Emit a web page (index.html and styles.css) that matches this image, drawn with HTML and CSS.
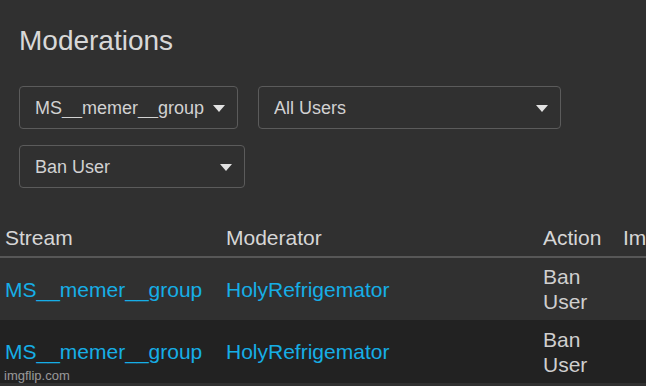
FILE: index.html
```html
<!DOCTYPE html>
<html lang="en">
<head>
  <title>Moderations</title>
  <meta charset="utf-8">
  <meta name="viewport" content="width=device-width, initial-scale=1">
  <link rel="stylesheet" href="styles.css">
</head>
<body>
  <section class="filters">
    <h1 class="title">Moderations</h1>

    <div class="filter-row">
      <div class="select-wrapper select-stream">
        <select class="select" name="stream">
          <option value="ms_memer_group" selected>MS__memer__group</option>
        </select>
      </div>
      <div class="select-wrapper select-users">
        <select class="select" name="user">
          <option value="all" selected>All Users</option>
        </select>
      </div>
    </div>

    <div class="filter-row">
      <div class="select-wrapper select-action">
        <select class="select" name="action">
          <option value="ban" selected>Ban User</option>
        </select>
      </div>
    </div>
  </section>

  <table class="log">
    <colgroup>
      <col class="col-stream">
      <col class="col-moderator">
      <col class="col-action">
      <col class="col-image">
    </colgroup>
    <thead>
      <tr>
        <th>Stream</th>
        <th>Moderator</th>
        <th>Action</th>
        <th>Image</th>
      </tr>
    </thead>
    <tbody>
      <tr>
        <td><a class="link" href="#">MS__memer__group</a></td>
        <td><a class="link" href="#">HolyRefrigemator</a></td>
        <td>Ban User</td>
        <td></td>
      </tr>
      <tr class="row-alt">
        <td><a class="link" href="#">MS__memer__group</a></td>
        <td><a class="link" href="#">HolyRefrigemator</a></td>
        <td>Ban User</td>
        <td></td>
      </tr>
    </tbody>
  </table>

  <div class="watermark">imgflip.com</div>
</body>
</html>
```

FILE: styles.css
```css
*, *::before, *::after {
  margin: 0;
  padding: 0;
  box-sizing: border-box;
}

body {
  min-height: 100vh;
  overflow: hidden;
  background-color: #303030;
  color: #d6d6d6;
  font-family: "Liberation Sans", Arial, sans-serif;
}

.filters {
  padding: 25px 19px 31px;
}

.title {
  margin-bottom: 29px;
  color: #d8d8d8;
  font-size: 28px;
  font-weight: 400;
  line-height: 32px;
}

.filter-row {
  display: flex;
  gap: 20px;
  margin-bottom: 16px;
}

.filter-row:last-child {
  margin-bottom: 0;
}

.select-wrapper {
  position: relative;
}

.select-wrapper::after {
  content: "";
  position: absolute;
  top: calc(50% - 3px);
  right: 13px;
  border-left: 6.5px solid transparent;
  border-right: 6.5px solid transparent;
  border-top: 7px solid #e2e2e2;
  pointer-events: none;
}

.select-stream { width: 219px; }
.select-users { width: 303px; }
.select-action { width: 226px; }

.select {
  display: block;
  width: 100%;
  height: 43px;
  border: 1px solid #5b5b5b;
  border-radius: 4px;
  padding: 0 30px 0 15px;
  background-color: #303030;
  color: #d2d2d2;
  font-family: inherit;
  font-size: 18px;
  -webkit-appearance: none;
  appearance: none;
}

.select:focus {
  outline: none;
}

.log {
  width: 738px;
  table-layout: fixed;
  border-collapse: collapse;
  font-size: 21px;
  line-height: 25px;
}

.col-stream { width: 221px; }
.col-moderator { width: 317px; }
.col-action { width: 80px; }
.col-image { width: 120px; }

.log th {
  padding: 6px 5px;
  border-bottom: 2px solid #575757;
  color: #d6d6d6;
  font-weight: 400;
  text-align: left;
  white-space: nowrap;
}

.log td {
  height: 63px;
  padding: 6px 5px;
  color: #cfcfcf;
  vertical-align: middle;
}

.row-alt {
  background-color: #222222;
}

.link {
  color: #16aee6;
  text-decoration: none;
  white-space: nowrap;
}

.watermark {
  position: absolute;
  left: 4px;
  bottom: 3px;
  color: rgba(255, 255, 255, 0.55);
  font-size: 13px;
  line-height: 15px;
}
```
